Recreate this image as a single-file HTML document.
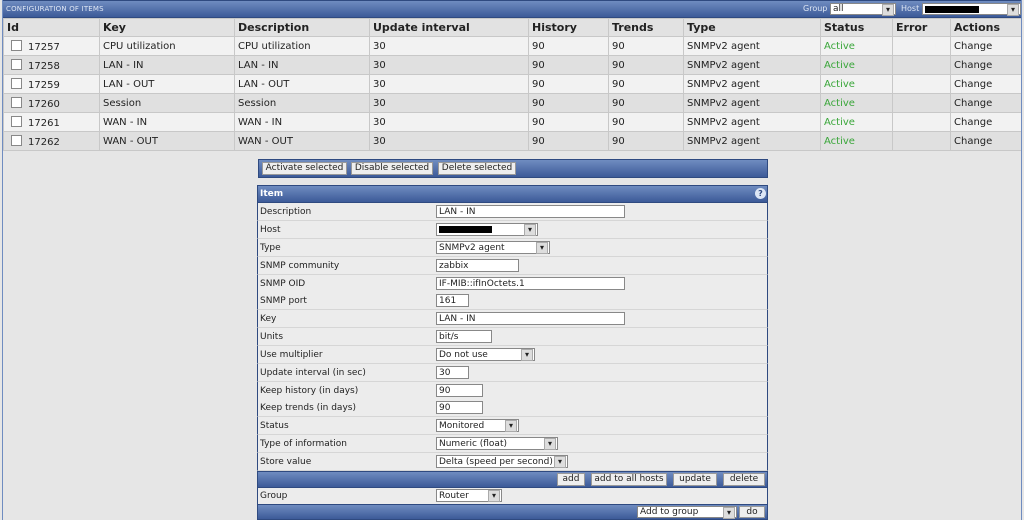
<!DOCTYPE html>
<html><head><style>
body{margin:0;width:1024px;height:520px;background:#e6e6e6;font-family:"DejaVu Sans","Liberation Sans",sans-serif;font-size:10px;color:#222;position:relative;overflow:hidden}
.bar{position:absolute;background:linear-gradient(#6f8cc0,#3c5a98);border:1px solid #2f4a80;box-sizing:border-box}
.abs{position:absolute}
table.items{position:absolute;left:3px;top:18px;width:1019px;border-collapse:collapse}
table.items td{border:1px solid #c8c8c8;height:18px;padding:0 0 0 3px;font-size:10px;white-space:nowrap}
table.items tr.h td{font-weight:bold;font-size:11px;background:#e2e2e2;height:17px}
tr.a td{background:#f2f2f2} tr.b td{background:#e0e0e0}
.cb{display:inline-block;width:9px;height:9px;border:1px solid #888;background:#fff;vertical-align:-1px;margin:0 6px 0 4px}
.act{color:#3aa63a}
.btn{position:absolute;top:2px;height:13px;background:#eee;border:1px solid #999;box-sizing:border-box;font-size:9px;line-height:11px;text-align:center;color:#222}
.row{position:absolute;left:257px;width:511px;height:18px;background:#ececec;border-left:1px solid #2f4a80;border-right:1px solid #2f4a80;border-bottom:1px solid #d6d6d6;box-sizing:border-box;font-size:9px;line-height:18px}
.row .l{position:absolute;left:2px}
.in{position:absolute;top:2px;height:13px;background:#fff;border:1px solid #888;box-sizing:border-box;font-size:9px;line-height:12px;padding-left:2px}
.sel::after{content:"▾";position:absolute;right:1px;top:0px;width:10px;height:10px;border:1px solid #aaa;background:#ddd;font-size:8px;line-height:10px;text-align:center}
</style></head><body>
<div class="bar" style="left:2px;top:0;width:1020px;height:18px"></div>
<div class="abs" style="left:6px;top:5px;font-size:7px;color:#dfe7f5;letter-spacing:0.2px">CONFIGURATION OF ITEMS</div>
<div class="abs" style="left:803px;top:4px;font-size:8px;color:#dfe7f5">Group</div>
<div class="in sel" style="left:830px;top:3px;width:66px;height:12px;line-height:11px">all</div>
<div class="abs" style="left:901px;top:4px;font-size:8px;color:#dfe7f5">Host</div>
<div class="in sel" style="left:922px;top:3px;width:99px;height:12px"><span style="display:inline-block;width:54px;height:7px;background:#000;margin-top:2px"></span></div>
<table class="items">
<tr class="h"><td style="width:92px">Id</td><td style="width:131px">Key</td><td style="width:131px">Description</td><td style="width:155px">Update interval</td><td style="width:76px">History</td><td style="width:71px">Trends</td><td style="width:133px">Type</td><td style="width:68px">Status</td><td style="width:54px">Error</td><td>Actions</td></tr>
<tr class="a"><td><span class="cb"></span>17257</td><td>CPU utilization</td><td>CPU utilization</td><td>30</td><td>90</td><td>90</td><td>SNMPv2 agent</td><td class="act">Active</td><td></td><td>Change</td></tr>
<tr class="b"><td><span class="cb"></span>17258</td><td>LAN - IN</td><td>LAN - IN</td><td>30</td><td>90</td><td>90</td><td>SNMPv2 agent</td><td class="act">Active</td><td></td><td>Change</td></tr>
<tr class="a"><td><span class="cb"></span>17259</td><td>LAN - OUT</td><td>LAN - OUT</td><td>30</td><td>90</td><td>90</td><td>SNMPv2 agent</td><td class="act">Active</td><td></td><td>Change</td></tr>
<tr class="b"><td><span class="cb"></span>17260</td><td>Session</td><td>Session</td><td>30</td><td>90</td><td>90</td><td>SNMPv2 agent</td><td class="act">Active</td><td></td><td>Change</td></tr>
<tr class="a"><td><span class="cb"></span>17261</td><td>WAN - IN</td><td>WAN - IN</td><td>30</td><td>90</td><td>90</td><td>SNMPv2 agent</td><td class="act">Active</td><td></td><td>Change</td></tr>
<tr class="b"><td><span class="cb"></span>17262</td><td>WAN - OUT</td><td>WAN - OUT</td><td>30</td><td>90</td><td>90</td><td>SNMPv2 agent</td><td class="act">Active</td><td></td><td>Change</td></tr>
</table>
<div class="abs" style="left:2px;top:0;width:1px;height:520px;background:#6f8cc0"></div>
<div class="abs" style="left:1021px;top:0;width:1px;height:520px;background:#6f8cc0"></div>

<div class="bar" style="left:258px;top:159px;width:510px;height:19px">
<div class="btn" style="left:3px;width:85px">Activate selected</div>
<div class="btn" style="left:92px;width:82px">Disable selected</div>
<div class="btn" style="left:179px;width:78px">Delete selected</div>
</div>

<div class="bar" style="left:257px;top:185px;width:511px;height:18px"></div>
<div class="abs" style="left:260px;top:189px;font-size:9px;font-weight:bold;color:#fff">Item</div>
<div class="abs" style="left:755px;top:188px;width:11px;height:11px;border-radius:50%;background:#dde6f5;color:#2f4a80;font-size:8px;font-weight:bold;line-height:11px;text-align:center">?</div>

<div class="row" style="top:203px"><span class="l">Description</span><div class="in" style="left:178px;width:189px">LAN - IN</div></div>
<div class="row" style="top:221px"><span class="l">Host</span><div class="in sel" style="left:178px;width:102px"><span style="display:inline-block;width:53px;height:7px;background:#000;margin-top:2px"></span></div></div>
<div class="row" style="top:239px"><span class="l">Type</span><div class="in sel" style="left:178px;width:114px">SNMPv2 agent</div></div>
<div class="row" style="top:257px"><span class="l">SNMP community</span><div class="in" style="left:178px;width:83px">zabbix</div></div>
<div class="row" style="top:275px"><span class="l">SNMP OID</span><div class="in" style="left:178px;width:189px">IF-MIB::ifInOctets.1</div></div>
<div class="row" style="top:292px"><span class="l">SNMP port</span><div class="in" style="left:178px;width:33px">161</div></div>
<div class="row" style="top:310px"><span class="l">Key</span><div class="in" style="left:178px;width:189px">LAN - IN</div></div>
<div class="row" style="top:328px"><span class="l">Units</span><div class="in" style="left:178px;width:56px">bit/s</div></div>
<div class="row" style="top:346px"><span class="l">Use multiplier</span><div class="in sel" style="left:178px;width:99px">Do not use</div></div>
<div class="row" style="top:364px"><span class="l">Update interval (in sec)</span><div class="in" style="left:178px;width:33px">30</div></div>
<div class="row" style="top:382px"><span class="l">Keep history (in days)</span><div class="in" style="left:178px;width:47px">90</div></div>
<div class="row" style="top:399px"><span class="l">Keep trends (in days)</span><div class="in" style="left:178px;width:47px">90</div></div>
<div class="row" style="top:417px"><span class="l">Status</span><div class="in sel" style="left:178px;width:83px">Monitored</div></div>
<div class="row" style="top:435px"><span class="l">Type of information</span><div class="in sel" style="left:178px;width:122px">Numeric (float)</div></div>
<div class="row" style="top:453px;height:18px"><span class="l">Store value</span><div class="in sel" style="left:178px;width:132px">Delta (speed per second)</div></div>
<div class="bar" style="left:257px;top:471px;width:511px;height:17px">
<div class="btn" style="left:299px;width:28px;top:1px">add</div>
<div class="btn" style="left:333px;width:76px;top:1px">add to all hosts</div>
<div class="btn" style="left:415px;width:44px;top:1px">update</div>
<div class="btn" style="left:465px;width:42px;top:1px">delete</div>
</div>
<div class="row" style="top:488px;height:17px;line-height:16px"><span class="l">Group</span><div class="in sel" style="left:178px;width:66px;top:1px">Router</div></div>
<div class="bar" style="left:257px;top:504px;width:511px;height:16px">
<div class="in sel" style="left:379px;top:1px;width:100px;height:12px;line-height:11px">Add to group</div>
<div class="btn" style="left:481px;width:26px;top:1px;height:12px;line-height:10px">do</div>
</div>
</body></html>
